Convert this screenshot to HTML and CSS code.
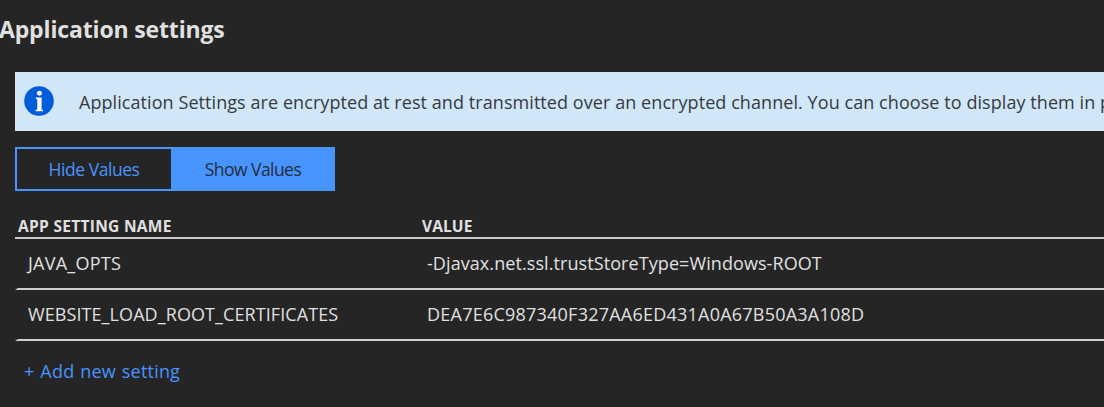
FILE: index.html
```
<!DOCTYPE html>
<html lang="en">
<head>
<meta charset="utf-8">
<title>Application settings</title>
<link rel="stylesheet" href="styles.css">
</head>
<body>
<main class="page">
  <h1 class="title">Application settings</h1>
  <div class="banner">
    <svg class="info-icon" viewBox="0 0 29 29" aria-hidden="true">
      <circle cx="14.5" cy="14.5" r="14.3" fill="#015cda"/>
      <circle cx="14.9" cy="7" r="2.4" fill="#fff"/>
      <path d="M11.4 11.2H17V22.8L18.4 23.3V24.5H11.2V23.3L12.8 22.8V12.8L11.4 12.3Z" fill="#fff"/>
    </svg>
    <p class="banner-text">Application Settings are encrypted at rest and transmitted over an encrypted channel. You can choose to display them in p</p>
  </div>
  <div class="toggle">
    <button class="option" type="button">Hide Values</button>
    <button class="option option-active" type="button">Show Values</button>
  </div>
  <div class="table">
    <div class="head"><span class="h-name">APP SETTING NAME</span><span class="h-value">VALUE</span></div>
    <div class="row"><span class="name java">JAVA_OPTS</span><span class="value opts">-Djavax.net.ssl.trustStoreType=Windows-ROOT</span></div>
    <div class="row"><span class="name website">WEBSITE_LOAD_ROOT_CERTIFICATES</span><span class="value hash">DEA7E6C987340F327AA6ED431A0A67B50A3A108D</span></div>
  </div>
  <a class="add">+ Add new setting</a>
</main>
</body>
</html>
```
FILE: styles.css
```
* { box-sizing: border-box; margin: 0; padding: 0; }
body { background: #252525; color: #e0e0e0; font-family: "Open Sans", "Noto Sans", sans-serif; font-size: 18px; overflow: hidden; }
.page { width: 1104px; height: 407px; overflow: hidden; white-space: nowrap; }
.title { height: 72px; margin-left: -1px; padding-top: 13px; font-size: 23px; line-height: 32px; font-weight: 700; letter-spacing: -0.15px; }
.banner { display: flex; height: 59px; margin-left: 15px; padding: 14px 0 0 9px; background: #d1e6f7; color: #363b3f; overflow: hidden; }
.info-icon { flex: none; width: 30px; height: 30px; }
.banner-text { margin-left: 25px; font-size: 18px; line-height: 32px; font-weight: 400; letter-spacing: 0.07px; }
.toggle { display: flex; width: 320px; height: 44px; margin: 16px 0 0 15px; border: 2px solid #4894fe; }
.option { flex: none; width: 154px; border: 0; background: transparent; color: #4894fe; font: inherit; font-size: 17.5px; letter-spacing: -0.45px; }
.option-active { width: 162px; padding-left: 2px; background: #4894fe; color: #252e3b; letter-spacing: -0.55px; }
.table { margin-left: 15px; }
.head { display: grid; grid-template-columns: 404px 1fr; height: 48px; padding: 24px 0 0 3px; border-bottom: 2px solid #c8cac9; font-size: 15.5px; line-height: 22px; font-weight: 700; }
.h-name { letter-spacing: 0.3px; }
.h-value { letter-spacing: 0.1px; }
.row { display: grid; grid-template-columns: 400px 1fr; height: 51px; padding-left: 12px; border-left: 3px solid transparent; border-bottom: 2px solid #cfcdce; line-height: 49px; }
.name, .value { margin-left: -3px; }
.name { padding-left: 1px; letter-spacing: 0.08px; }
.java { letter-spacing: 0.25px; }
.opts { letter-spacing: 0.08px; }
.hash { letter-spacing: 0.23px; }
.add { display: block; margin: 16px 0 0 24px; color: #4894fe; line-height: 28px; letter-spacing: 0.2px; word-spacing: 1px; }
```
